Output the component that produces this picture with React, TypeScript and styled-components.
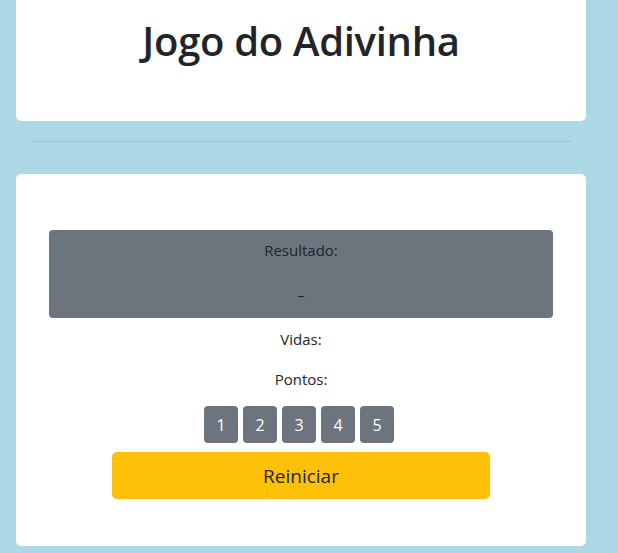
import styled, { createGlobalStyle } from "styled-components";

const GlobalStyle = createGlobalStyle`
  html, body {
    margin: 0;
    padding: 0;
    background: #add8e6;
    font-family: "Open Sans", "Noto Sans", sans-serif;
    color: #212529;
  }
`;

const Page = styled.div`
  display: flex;
  flex-direction: column;
  padding: 0 32px 0 16px;
  height: 553px;
  box-sizing: border-box;
  overflow: hidden;
`;

const Card = styled.div<{ $top?: boolean }>`
  background: #fff;
  border-radius: ${(p) => (p.$top ? "0 0 5px 5px" : "5px")};
  width: 570px;
  box-sizing: border-box;
  flex-shrink: 0;
`;

const HeaderCard = styled(Card)`
  height: 121px;
  display: flex;
  justify-content: center;
  padding-top: 13px;
`;

const Title = styled.h1`
  margin: 0;
  font-size: 40px;
  font-weight: 600;
  line-height: 56px;
  letter-spacing: -0.3px;
`;

const Divider = styled.hr`
  border: 0;
  border-top: 1px solid #9cc5d3;
  margin: 20px 15px 32px;
  flex-shrink: 0;
`;

const GameCard = styled(Card)`
  display: flex;
  flex-direction: column;
  align-items: center;
  padding: 56px 33px 47px;
  height: 372px;
`;

const ResultBox = styled.div`
  width: 100%;
  background: #6c757d;
  border-radius: 4px;
  padding: 8px 0 11px;
  display: flex;
  flex-direction: column;
  align-items: center;
  gap: 21px;
  font-size: 15px;
  line-height: 24px;
  box-sizing: border-box;
  flex-shrink: 0;
`;

const Line = styled.p<{ $gap?: number }>`
  margin: ${(p) => p.$gap ?? 0}px 0 0;
  font-size: 15px;
  line-height: 24px;
`;

const NumberRow = styled.div`
  display: flex;
  gap: 5px;
  margin-top: 15px;
  padding-right: 4px;
`;

const NumberButton = styled.button`
  width: 34px;
  height: 37px;
  border: 0;
  border-radius: 4px;
  background: #6c757d;
  color: #fff;
  font-family: inherit;
  font-size: 16px;
  padding: 0;
`;

const ResetButton = styled.button`
  margin-top: 9px;
  width: 75%;
  height: 47px;
  flex-shrink: 0;
  border: 0;
  border-radius: 5px;
  background: #ffc107;
  color: #212529;
  font-family: inherit;
  font-size: 19px;
`;

export default function App() {
  return (
    <>
      <GlobalStyle />
      <Page>
        <HeaderCard $top>
          <Title>Jogo do Adivinha</Title>
        </HeaderCard>
        <Divider />
        <GameCard>
          <ResultBox>
            <span>Resultado:</span>
            <span>–</span>
          </ResultBox>
          <Line $gap={9}>Vidas:</Line>
          <Line $gap={16}>Pontos:</Line>
          <NumberRow>
            {[1, 2, 3, 4, 5].map((n) => (
              <NumberButton key={n}>{n}</NumberButton>
            ))}
          </NumberRow>
          <ResetButton>Reiniciar</ResetButton>
        </GameCard>
      </Page>
    </>
  );
}
